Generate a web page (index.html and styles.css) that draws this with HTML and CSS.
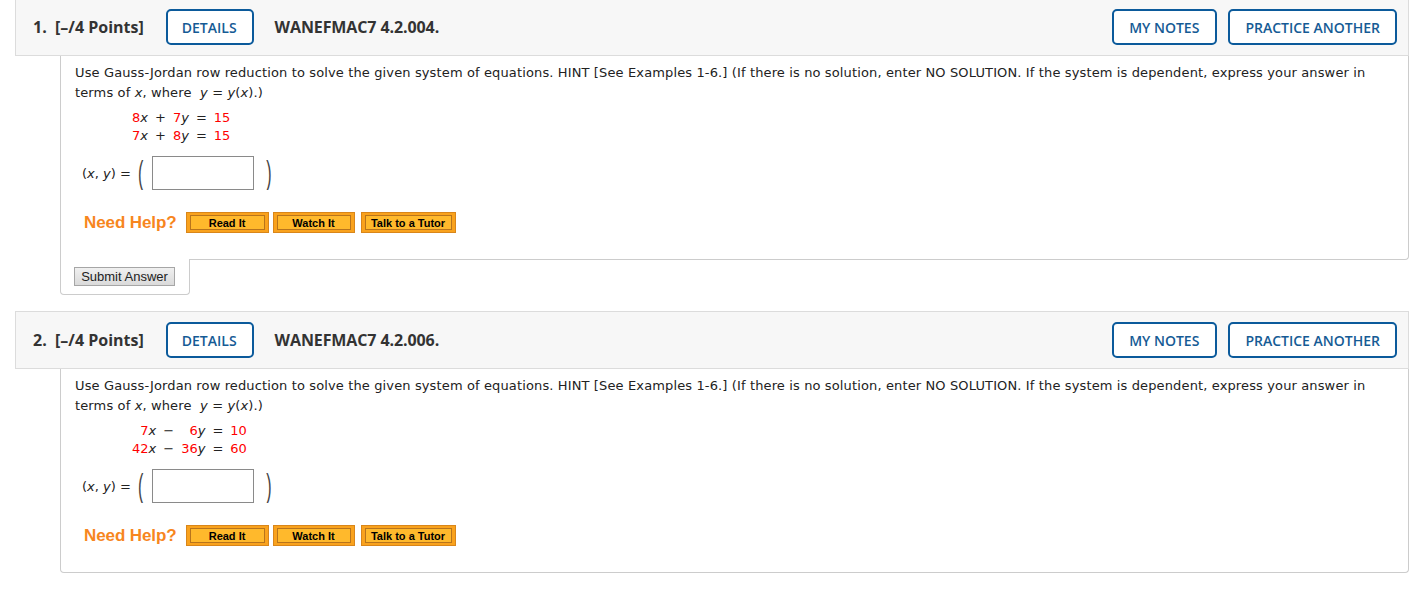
FILE: index.html
```html
<!DOCTYPE html>
<html>
<head>
<meta charset="utf-8">
<link rel="stylesheet" href="styles.css">
</head>
<body>
<div class="page">

  <div class="qhead">
    <span class="qnum">1.</span>
    <span class="qpts">[–/4 Points]</span>
    <button class="obtn details">DETAILS</button>
    <span class="qtitle">WANEFMAC7 4.2.004.</span>
    <span class="spacer"></span>
    <button class="obtn notes">MY NOTES</button>
    <button class="obtn">PRACTICE ANOTHER</button>
  </div>
  <div class="qbody tabbed">
    <p class="qtext">Use Gauss-Jordan row reduction to solve the given system of equations. HINT [See Examples 1-6.] (If there is no solution, enter NO SOLUTION. If the system is dependent, express your answer in terms of <i>x</i>, where &nbsp;<i>y</i> = <i>y</i>(<i>x</i>).)</p>
    <div class="system">
      <span class="r"><span class="red">8</span><i>x</i></span><span>+</span><span class="r"><span class="red">7</span><i>y</i></span><span>=</span><span class="red">15</span>
      <span class="r"><span class="red">7</span><i>x</i></span><span>+</span><span class="r"><span class="red">8</span><i>y</i></span><span>=</span><span class="red">15</span>
    </div>
    <div class="answer">
      <span class="alabel">(<i>x</i>, <i>y</i>) =</span>
      <span class="paren lp">(</span>
      <span class="abox"></span>
      <span class="paren rp">)</span>
    </div>
    <div class="help">
      <span class="needhelp">Need Help?</span>
      <button class="hbtn w83"><span>Read It</span></button>
      <button class="hbtn w82"><span>Watch It</span></button>
      <button class="hbtn w95"><span>Talk to a Tutor</span></button>
    </div>
  </div>
  <div class="submittab">
    <button class="submit">Submit Answer</button>
  </div>

  <div class="qhead second">
    <span class="qnum">2.</span>
    <span class="qpts">[–/4 Points]</span>
    <button class="obtn details">DETAILS</button>
    <span class="qtitle">WANEFMAC7 4.2.006.</span>
    <span class="spacer"></span>
    <button class="obtn notes">MY NOTES</button>
    <button class="obtn">PRACTICE ANOTHER</button>
  </div>
  <div class="qbody">
    <p class="qtext">Use Gauss-Jordan row reduction to solve the given system of equations. HINT [See Examples 1-6.] (If there is no solution, enter NO SOLUTION. If the system is dependent, express your answer in terms of <i>x</i>, where &nbsp;<i>y</i> = <i>y</i>(<i>x</i>).)</p>
    <div class="system">
      <span class="r"><span class="red">7</span><i>x</i></span><span>−</span><span class="r"><span class="red">6</span><i>y</i></span><span>=</span><span class="red">10</span>
      <span class="r"><span class="red">42</span><i>x</i></span><span>−</span><span class="r"><span class="red">36</span><i>y</i></span><span>=</span><span class="red">60</span>
    </div>
    <div class="answer">
      <span class="alabel">(<i>x</i>, <i>y</i>) =</span>
      <span class="paren lp">(</span>
      <span class="abox"></span>
      <span class="paren rp">)</span>
    </div>
    <div class="help">
      <span class="needhelp">Need Help?</span>
      <button class="hbtn w83"><span>Read It</span></button>
      <button class="hbtn w82"><span>Watch It</span></button>
      <button class="hbtn w95"><span>Talk to a Tutor</span></button>
    </div>
  </div>

</div>
</body>
</html>
```
FILE: styles.css
```css
html, body {
  margin: 0;
  padding: 0;
  background: #ffffff;
}
.page {
  margin-top: -2px;
  padding-left: 15px;
  width: 1394px;
}
.qhead {
  box-sizing: border-box;
  height: 58px;
  display: flex;
  align-items: center;
  background: #f7f7f7;
  border: 1px solid #dcdcdc;
  padding: 0 11px 0 17px;
  font-family: "Open Sans", sans-serif;
  color: #333333;
}
.qhead.second {
  margin-top: 16px;
}
.qnum {
  font-size: 16px;
  font-weight: 700;
  width: 22px;
}
.qpts {
  font-size: 16px;
  font-weight: 700;
}
.qtitle {
  font-size: 16px;
  font-weight: 700;
  letter-spacing: -0.1px;
}
.spacer {
  flex: 1;
}
.obtn {
  box-sizing: border-box;
  height: 36px;
  padding: 0 15px;
  background: #ffffff;
  border: 2px solid #0b5a9b;
  border-radius: 5px;
  font-family: "Open Sans", sans-serif;
  font-size: 14px;
  font-weight: 600;
  color: #155b95;
  margin-left: 11px;
}
.obtn.notes {
  padding: 0 16px 0 15px;
}
.obtn.details {
  margin-left: 22px;
  margin-right: 21px;
  padding: 0 15px 0 14px;
}
.qbody {
  margin-left: 45px;
  border: 1px solid #cccccc;
  border-top: none;
  border-radius: 0 0 4px 4px;
  padding: 7px 24px 26px 14px;
  font-family: "DejaVu Sans", Verdana, sans-serif;
  font-size: 13px;
  color: #222222;
}
.qbody.tabbed {
  border-bottom-left-radius: 0;
}
.qtext {
  margin: 0;
  line-height: 20px;
  letter-spacing: 0.13px;
}
.system {
  display: inline-grid;
  grid-template-columns: auto auto auto auto auto;
  column-gap: 7px;
  margin: 6px 0 0 57px;
  line-height: 18px;
}
.system .r {
  text-align: right;
}
.red {
  color: #ff0000;
}
.answer {
  display: flex;
  align-items: center;
  margin: 11px 0 0 7px;
  height: 34px;
}
.alabel {
  font-size: 13px;
  width: 56px;
}
.paren {
  font-family: "Liberation Sans", Arial, sans-serif;
  font-size: 16px;
  color: #444444;
  display: inline-block;
  transform: scaleY(2.1);
}
.lp {
  margin-right: 9px;
}
.rp {
  margin-left: 12px;
}
.abox {
  box-sizing: border-box;
  width: 102px;
  height: 34px;
  border: 1px solid #8a8a8a;
  background: #ffffff;
}
.help {
  display: flex;
  align-items: center;
  margin: 22px 0 0 9px;
  height: 21px;
}
.needhelp {
  font-family: "Liberation Sans", Arial, sans-serif;
  font-size: 17px;
  font-weight: 700;
  color: #f7861e;
  margin-right: 9px;
  letter-spacing: -0.1px;
}
.hbtn {
  box-sizing: border-box;
  height: 21px;
  padding: 2px 3px;
  background: #f9a21d;
  border: 1px solid #d9861a;
  margin: 0 5px 0 0;
  display: flex;
}
.hbtn span {
  flex: 1;
  box-sizing: border-box;
  display: flex;
  align-items: center;
  justify-content: center;
  background: #ffb92c;
  border: 1px solid #b8741c;
  font-family: "Liberation Sans", Arial, sans-serif;
  font-size: 11px;
  font-weight: 700;
  color: #000000;
}
.w83 { width: 83px; margin-right: 4px; }
.w82 { width: 82px; margin-right: 6px; }
.w95 { width: 95px; }
.submittab {
  position: relative;
  margin: -1px 0 0 45px;
  box-sizing: border-box;
  width: 130px;
  background: #ffffff;
  border: 1px solid #cccccc;
  border-top: none;
  border-radius: 0 0 4px 4px;
  padding: 8px 13px 8px 13px;
}
.submit {
  display: block;
  box-sizing: border-box;
  width: 101px;
  height: 19px;
  padding: 0;
  background: linear-gradient(#f0f0f0, #dadada);
  border: 1px solid #a6a6a6;
  font-family: "Liberation Sans", Arial, sans-serif;
  font-size: 13px;
  color: #222222;
}
```
